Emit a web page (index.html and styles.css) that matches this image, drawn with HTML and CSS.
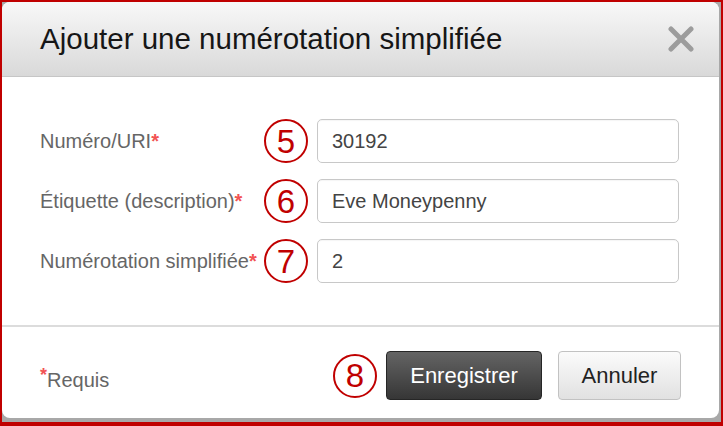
FILE: index.html
```html
<!DOCTYPE html>
<html lang="fr">
<head>
    <meta charset="UTF-8">
    <meta name="viewport" content="width=device-width, initial-scale=1.0">
    <title>Ajouter une numérotation simplifiée</title>
    <link rel="stylesheet" href="styles.css">
</head>
<body>
    <div class="frame">
        <div class="dialog">
            <header class="dialog-header">
                <h1>Ajouter une numérotation simplifiée</h1>
                <button class="close" aria-label="Fermer">
                    <svg width="28" height="26" viewBox="0 0 28 26">
                        <path d="M4 3 L24 23 M24 3 L4 23" stroke="#9c9c9c" stroke-width="5" stroke-linecap="round"/>
                    </svg>
                </button>
            </header>

            <form class="dialog-body" onsubmit="return false;">
                <div class="row">
                    <label for="number">Numéro/URI<span class="req">*</span></label>
                    <span class="marker">5</span>
                    <input type="text" id="number" value="30192">
                </div>
                <div class="row">
                    <label for="label">Étiquette (description)<span class="req">*</span></label>
                    <span class="marker">6</span>
                    <input type="text" id="label" value="Eve Moneypenny">
                </div>
                <div class="row">
                    <label for="speed">Numérotation simplifiée<span class="req">*</span></label>
                    <span class="marker">7</span>
                    <input type="text" id="speed" value="2">
                </div>
            </form>

            <footer class="dialog-footer">
                <span class="required-note"><span class="req">*</span>Requis</span>
                <div class="actions">
                    <span class="marker">8</span>
                    <button class="btn btn-primary">Enregistrer</button>
                    <button class="btn btn-default">Annuler</button>
                </div>
            </footer>
        </div>
    </div>
</body>
</html>
```

FILE: styles.css
```css
html, body {
    margin: 0;
    padding: 0;
}

body {
    font-family: 'Liberation Sans', Arial, sans-serif;
    background-color: #fff;
}

.frame {
    width: 723px;
    height: 426px;
    box-sizing: border-box;
    border: solid #c00000;
    border-width: 2px 2px 4px 2px;
    background-color: #a8a8a8;
    padding: 0 2px 4px 0;
}

.dialog {
    height: 100%;
    background-color: #fff;
    border-radius: 8px;
    overflow: hidden;
    display: flex;
    flex-direction: column;
}

.dialog-header {
    height: 74px;
    border-bottom: 1px solid #c6c6c6;
    background: linear-gradient(#f8f8f8, #d9d9d9);
    display: flex;
    align-items: center;
    justify-content: space-between;
    padding: 0 24px 0 38px;
}

.dialog-header h1 {
    margin: 0;
    font-size: 29.5px;
    font-weight: normal;
    color: #161616;
}

.close {
    border: none;
    background: none;
    padding: 0;
    display: flex;
    cursor: pointer;
}

.dialog-body {
    margin: 0;
    padding: 42px 38px 42px 38px;
    display: flex;
    flex-direction: column;
    gap: 16px;
    border-bottom: 2px solid #dcdcdc;
}

.row {
    display: flex;
    align-items: center;
    height: 44px;
}

.row label {
    width: 224px;
    font-size: 20px;
    color: #666;
    white-space: nowrap;
}

.req {
    color: #f25353;
    font-weight: bold;
}

.marker {
    width: 44px;
    height: 44px;
    box-sizing: border-box;
    border: 2.5px solid #c00000;
    border-radius: 50%;
    color: #c00000;
    font-size: 33px;
    line-height: 1;
    display: flex;
    align-items: center;
    justify-content: center;
    flex-shrink: 0;
}

.row input {
    margin-left: 9px;
    width: 362px;
    height: 44px;
    box-sizing: border-box;
    border: 1px solid #c8c8c8;
    border-radius: 5px;
    padding: 0 14px;
    font-family: 'Liberation Sans', Arial, sans-serif;
    font-size: 20px;
    color: #444;
    box-shadow: inset 0 1px 1px rgba(0, 0, 0, 0.04);
}

.dialog-footer {
    flex-grow: 1;
    display: flex;
    align-items: flex-start;
    justify-content: space-between;
    padding: 24px 38px 0 38px;
}

.required-note {
    font-size: 20px;
    color: #666;
    line-height: 49px;
}

.required-note .req {
    font-weight: bold;
    vertical-align: 6px;
    font-size: 18px;
}

.actions {
    display: flex;
    align-items: center;
}

.actions .marker {
    margin-right: 9px;
}

.btn {
    height: 49px;
    border-radius: 4px;
    font-family: 'Liberation Sans', Arial, sans-serif;
    font-size: 22px;
    cursor: pointer;
}

.btn-primary {
    width: 156px;
    border: 1px solid #262626;
    background: linear-gradient(#646464, #363636);
    color: #fff;
}

.btn-default {
    width: 123px;
    margin-left: 16px;
    border: 1px solid #c2c2c2;
    background: linear-gradient(#fbfbfb, #e1e1e1);
    color: #222;
}
```
